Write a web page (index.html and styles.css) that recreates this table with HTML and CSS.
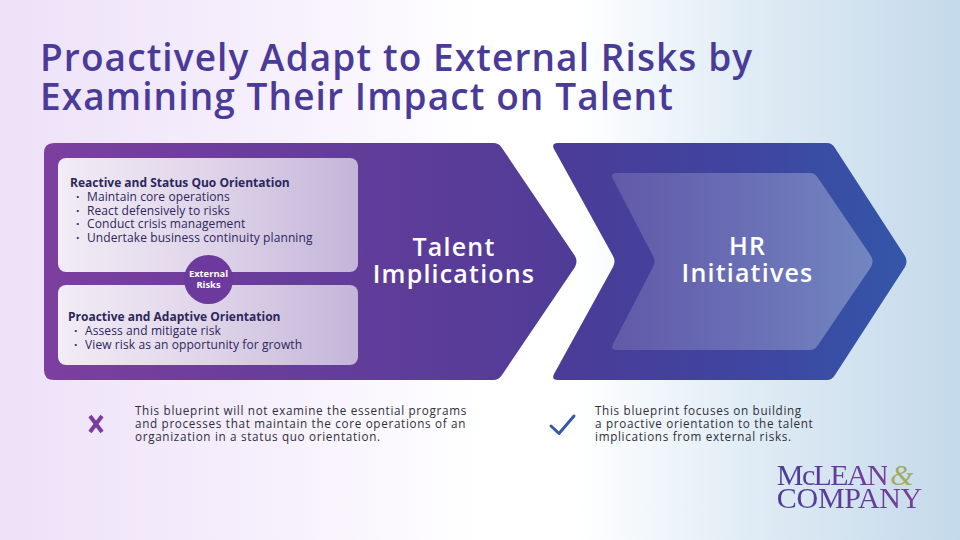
FILE: index.html
```html
<!DOCTYPE html>
<html>
<head>
<meta charset="utf-8">
<link rel="stylesheet" href="styles.css">
</head>
<body>
<div class="slide">
  <h1 class="title">Proactively Adapt to External Risks by<br>Examining Their Impact on Talent</h1>

  <div class="flow">
    <div class="chev-left">
      <div class="panels">
        <div class="panel panel-top">
          <div class="panel-head">Reactive and Status Quo Orientation</div>
          <ul class="panel-list">
            <li>Maintain core operations</li>
            <li>React defensively to risks</li>
            <li>Conduct crisis management</li>
            <li>Undertake business continuity planning</li>
          </ul>
        </div>
        <div class="panel panel-bottom">
          <div class="panel-head">Proactive and Adaptive Orientation</div>
          <ul class="panel-list">
            <li>Assess and mitigate risk</li>
            <li>View risk as an opportunity for growth</li>
          </ul>
        </div>
        <div class="risk-badge">External<br>Risks</div>
      </div>
      <div class="chev-label">Talent<br>Implications</div>
    </div>

    <div class="chev-right">
      <div class="chev-inner">
        <div class="chev-label">HR<br>Initiatives</div>
      </div>
    </div>
  </div>

  <div class="notes">
    <div class="note note-no">
      <svg class="note-icon" width="30" height="30" viewBox="0 0 30 30">
        <path d="M9 7 L21 23 M21 7 L9 23" stroke="#7a3d9f" stroke-width="4" stroke-linecap="butt" fill="none"/>
      </svg>
      <p class="note-text">This blueprint will not examine the essential programs<br>and processes that maintain the core operations of an<br>organization in a status quo orientation.</p>
    </div>
    <div class="note note-yes">
      <svg class="note-icon" width="30" height="30" viewBox="0 0 30 30">
        <path d="M3 17 L11 24.5 L26 7" stroke="#3557a6" stroke-width="3" stroke-linecap="round" stroke-linejoin="round" fill="none"/>
      </svg>
      <p class="note-text">This blueprint focuses on building<br>a proactive orientation to the talent<br>implications from external risks.</p>
    </div>
  </div>

  <div class="logo-row">
    <div class="logo">
      <div class="logo-line1"><span class="logo-word">McLEAN</span><span class="amp">&amp;</span></div>
      <div class="logo-line2"><span class="logo-word">COMPANY</span></div>
    </div>
  </div>
</div>
</body>
</html>
```

FILE: styles.css
```css
html, body {
  margin: 0;
  padding: 0;
}

body {
  width: 960px;
  height: 540px;
  overflow: hidden;
  font-family: "Open Sans", "DejaVu Sans", sans-serif;
  background: linear-gradient(90deg, #ede1f8 0%, #f6effc 28%, #ffffff 50%, #ffffff 60%, #e0ecf5 78%, #c4d9ea 100%);
}

.slide {
  padding: 37px 0 0 40px;
  height: 540px;
  box-sizing: border-box;
}

.title {
  margin: 0;
  font-size: 37px;
  line-height: 39px;
  font-weight: 600;
  color: #4a3b98;
  letter-spacing: 1.1px;
}

.flow {
  display: flex;
  margin-top: 28px;
  margin-left: 4px;
}

.chev-left {
  width: 534px;
  height: 237px;
  box-sizing: border-box;
  display: flex;
  padding: 15px 0 15px 14px;
  background: linear-gradient(90deg, #7c3f9f 0%, #6a3d9b 40%, #4f3c97 100%);
  clip-path: path("M10,0 L449,0 Q455,0 458,5 L531,113 Q534,118.5 531,124 L458,232 Q455,237 449,237 L10,237 Q0,237 0,227 L0,10 Q0,0 10,0 Z");
}

.panels {
  position: relative;
  width: 300px;
  display: flex;
  flex-direction: column;
  gap: 13px;
}

.panel {
  border-radius: 8px;
  box-sizing: border-box;
  color: #2c275c;
  background: linear-gradient(90deg, rgba(255,255,255,0.9) 0%, rgba(255,255,255,0.78) 50%, rgba(255,255,255,0.62) 100%);
}

.panel-top {
  height: 114px;
  padding: 18px 0 0 12px;
}

.panel-bottom {
  height: 80px;
  padding: 25px 0 0 10px;
}

.panel-head {
  font-size: 12px;
  line-height: 14px;
  font-weight: 700;
}

.panel-list {
  list-style: none;
  margin: 0;
  padding: 0 0 0 6px;
  font-size: 12px;
  line-height: 13.6px;
  letter-spacing: 0.1px;
}

.panel-list li::before {
  content: "·";
  display: inline-block;
  width: 11px;
  font-weight: 700;
}

.risk-badge {
  position: absolute;
  left: 126px;
  top: 97px;
  width: 49px;
  height: 49px;
  border-radius: 50%;
  background: #6c3a9c;
  color: #ffffff;
  font-size: 9.4px;
  line-height: 10.5px;
  font-weight: 700;
  display: flex;
  align-items: center;
  justify-content: center;
  text-align: center;
}

.chev-label {
  color: #ffffff;
  font-size: 25px;
  line-height: 27px;
  font-weight: 600;
  text-align: center;
  letter-spacing: 1.2px;
}

.chev-left .chev-label {
  width: 192px;
  align-self: center;
  margin-top: -4px;
}

.chev-right {
  width: 356px;
  height: 237px;
  margin-left: -27px;
  box-sizing: border-box;
  padding: 30px 0 0 58px;
  background: linear-gradient(90deg, #4b3b97 0%, #3f45a0 55%, #3356a8 100%);
  clip-path: path("M7,0 L276,0 Q281,0 284,5 L354,113 Q357,118.5 354,124 L284,232 Q281,237 276,237 L7,237 Q0,237 3,231 L62,124 Q65,118.5 62,113 L3,6 Q0,0 7,0 Z");
}

.chev-inner {
  width: 265px;
  height: 177px;
  box-sizing: border-box;
  padding: 0 0 6px 12px;
  display: flex;
  align-items: center;
  justify-content: center;
  background: linear-gradient(90deg, rgba(255,255,255,0.14) 0%, rgba(255,255,255,0.22) 50%, rgba(255,255,255,0.3) 100%);
  clip-path: path("M8,0 L201,0 Q206,0 209,5 L262,83 Q265,88.5 262,94 L209,172 Q206,177 201,177 L8,177 Q1,177 4,171 L44,94 Q47,88.5 44,83 L4,6 Q1,0 8,0 Z");
}

.notes {
  display: flex;
  margin-top: 24px;
}

.note {
  display: flex;
  align-items: center;
}

.note-no {
  margin-left: 41px;
  gap: 24px;
  width: 467px;
}

.note-yes {
  gap: 17px;
}

.note-icon {
  flex: none;
}

.note-text {
  margin: 0;
  font-size: 11.7px;
  line-height: 13.2px;
  letter-spacing: 0.68px;
  color: #2f2f3a;
}

.logo-row {
  display: flex;
  justify-content: flex-end;
  margin-top: 19px;
  padding-right: 38px;
}

.logo {
  font-family: "Liberation Serif", "DejaVu Serif", serif;
  font-size: 30px;
  line-height: 23px;
}

.logo-word {
  background: linear-gradient(90deg, #4d3c98 0%, #5e3c98 50%, #7a3e9a 100%);
  -webkit-background-clip: text;
  background-clip: text;
  color: transparent;
}

.logo-line1 .logo-word {
  letter-spacing: -1.6px;
}

.logo-line2 .logo-word {
  letter-spacing: -0.3px;
}

.amp {
  color: #a3aa62;
  font-style: italic;
  margin-left: 3px;
}
```
